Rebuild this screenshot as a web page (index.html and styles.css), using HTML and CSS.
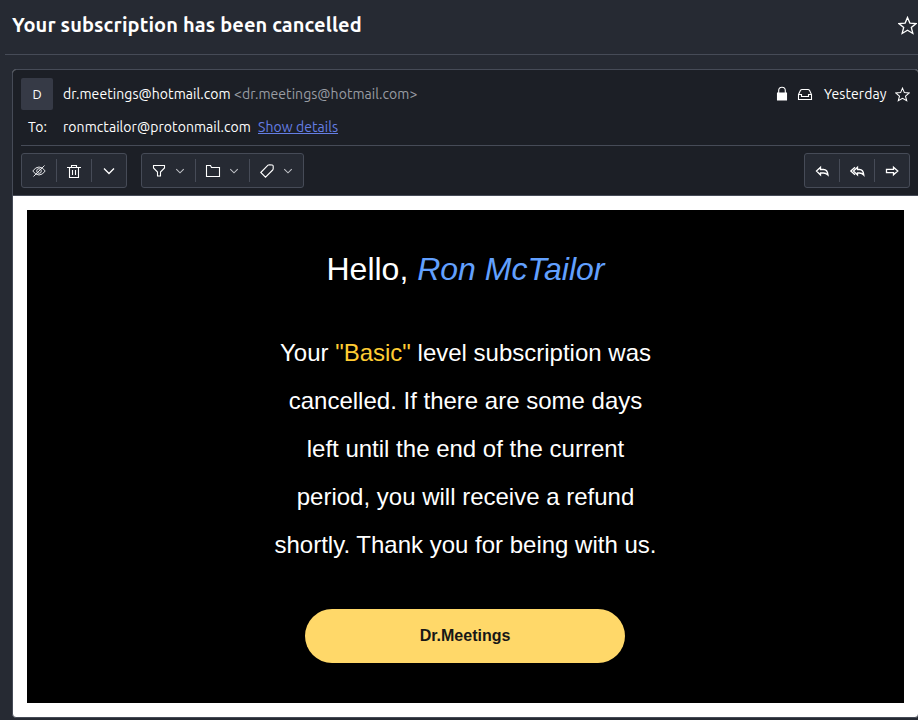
FILE: index.html
```html
<!DOCTYPE html>
<html lang="en">
<head>
<meta charset="utf-8">
<title>Your subscription has been cancelled</title>
<link rel="stylesheet" href="styles.css">
</head>
<body>
<svg class="defs" width="0" height="0">
  <symbol id="star" viewBox="0 0 16 16"><path d="M8 1.200l2 4.800 5.200.4-4 3.300 1.300 5L8 12l-4.500 2.700 1.300-5-4-3.300L6 6z"/></symbol>
  <symbol id="chev" viewBox="0 0 16 16"><path d="M3 5.500l5 5 5-5"/></symbol>
</svg>
<header class="title-bar">
  <h1 class="title">Your subscription has been cancelled</h1>
  <svg class="icon title-star" width="19" height="19"><use href="#star"/></svg>
</header>
<article class="card">
  <div class="message-head">
    <div class="row sender-row">
      <span class="avatar">D</span>
      <span class="sender">dr.meetings@hotmail.com</span>
      <span class="address">&lt;dr.meetings@hotmail.com&gt;</span>
      <div class="meta">
        <svg class="icon" width="14" height="16" viewBox="0 0 14 16"><path class="solid" d="M2.500 7h9v7h-9z"/><path d="M3.700 7V4.500a3.300 3.300 0 0 1 6.600 0V7"/></svg>
        <svg class="icon inbox" width="16" height="16" viewBox="0 0 16 16"><path d="M1.500 8.500L3.500 4.200Q4 3.500 5 3.500h6q1 0 1.500.7l2 4.300v5h-13zM1.500 8.500h3v2h7v-2h3"/></svg>
        <span class="date">Yesterday</span>
        <svg class="icon small-star" width="15" height="15"><use href="#star"/></svg>
      </div>
    </div>
    <div class="row to-row">
      <span class="to-label">To:</span>
      <span class="recipient">ronmctailor@protonmail.com</span>
      <a class="details" href="#">Show details</a>
    </div>
    <div class="toolbar">
      <div class="group">
        <button class="tool"><svg class="icon soft" width="16" height="16" viewBox="0 0 16 16"><path d="M1.800 8Q4.500 4 8 4t6.200 4Q11.500 12 8 12T1.800 8z"/><circle cx="8" cy="8" r="2.300"/><path d="M2.500 13.500l11-11"/></svg></button>
        <button class="tool"><svg class="icon" width="16" height="16" viewBox="0 0 16 16"><path d="M1 4.500h14M5.500 4V2.500h5V4M3.500 4.500v10h9v-10M6.500 7v5M9.500 7v5"/></svg></button>
        <button class="tool"><svg class="icon bold" width="16" height="16"><use href="#chev"/></svg></button>
      </div>
      <div class="group group-wide">
        <button class="tool"><svg class="icon" width="16" height="16" viewBox="0 0 16 16"><path d="M2.500 2.500h11V5L9.500 9v4h-3V9l-4-4z"/></svg><svg class="icon faint" width="12" height="12"><use href="#chev"/></svg></button>
        <button class="tool"><svg class="icon" width="16" height="16" viewBox="0 0 16 16"><path d="M1.500 13.500v-11h4l1 2h8v9z"/></svg><svg class="icon faint" width="12" height="12"><use href="#chev"/></svg></button>
        <button class="tool"><svg class="icon" width="16" height="16" viewBox="0 0 16 16"><path d="M1.800 9.500L9 2.200q.5-.5 1.500-.5l2.700.3q1 .2 1 1.200v2.600q0 .7-.5 1.200L6.500 14.200z"/></svg><svg class="icon faint" width="12" height="12"><use href="#chev"/></svg></button>
      </div>
      <div class="group group-end">
        <button class="tool"><svg class="icon bold" width="16" height="16" viewBox="0 0 16 16"><path d="M2.500 8l4-3.700V6.500h3q4 0 4.500 5.500Q12 10 9.500 10h-3v2z"/></svg></button>
        <button class="tool"><svg class="icon bold" width="16" height="16" viewBox="0 0 16 16"><path d="M4.500 8l4-3.700V6.500h2q3.800 0 4.300 5.500Q13 10 10.500 10h-2v2zM6 4.200L1.800 8 6 11.800"/></svg></button>
        <button class="tool"><svg class="icon bold" width="16" height="16" viewBox="0 0 16 16"><path d="M2.500 6.300h7V4.200L13.800 8l-4.300 3.800V9.700h-7z"/></svg></button>
      </div>
    </div>
  </div>
  <div class="message-body">
    <div class="mail">
      <p class="greeting">Hello, <em class="name">Ron McTailor</em></p>
      <p class="copy">Your <span class="level">"Basic"</span> level subscription was<br>cancelled. If there are some days<br>left until the end of the current<br>period, you will receive a refund<br>shortly. Thank you for being with us.</p>
      <a class="brand">Dr.Meetings</a>
    </div>
  </div>
</article>
</body>
</html>
```
FILE: styles.css
```css
* { box-sizing: border-box; }
body {
  margin: 0;
  height: 720px;
  overflow: hidden;
  background: #262a33;
  color: #fff;
  font: 14px/20px Ubuntu, "Noto Sans", sans-serif;
}
.defs { display: block; height: 0; }
.icon { flex: none; fill: none; stroke: #fff; stroke-width: 1.1; }
.icon .solid { fill: #fff; }
.soft { stroke: #e4e5e8; stroke-width: 1; }
.bold { stroke-width: 1.3; }
.faint { stroke: #c0c2c7; stroke-width: 1.4; }
.title-bar {
  display: flex;
  align-items: center;
  justify-content: space-between;
  height: 55px;
  margin-left: 5px;
  padding: 0 1px 5px 7px;
  border-bottom: 1px solid #464b57;
}
.title { margin: 0; font-size: 20px; font-weight: 700; white-space: nowrap; letter-spacing: .12px; }
.title-star { margin: 1px 0 0; }
.card {
  width: 907px;
  height: 649px;
  margin: 14px 0 0 12px;
  border: 1px solid #464b57;
  border-radius: 4px;
  overflow: hidden;
  background: #fff;
}
.message-head { height: 126px; padding: 8px 8px 0 8px; background: #1c1f26; border-bottom: 1px solid #464b57; }
.row { display: flex; align-items: center; white-space: nowrap; }
.sender-row { height: 32px; }
.avatar {
  width: 32px;
  height: 32px;
  margin-right: 10px;
  border-radius: 2px;
  background: #363a46;
  font-size: 13px;
  line-height: 32px;
  text-align: center;
}
.sender { width: 171px; letter-spacing: .06px; }
.address { color: #999ca3; letter-spacing: .05px; }
.meta { display: flex; align-items: center; margin-left: auto; }
.inbox { margin-left: 8px; }
.date { width: 63px; margin: 0 8px 0 11px; letter-spacing: .06px; }
.to-row { height: 35px; padding-bottom: 1px; }
.to-label { width: 35px; margin-left: 7px; letter-spacing: .06px; }
.recipient { width: 195px; letter-spacing: .06px; }
.details { color: #657ee4; text-decoration: underline; letter-spacing: .06px; }
.toolbar { display: flex; height: 50px; padding-top: 7px; border-top: 1px solid #464b57; }
.group { display: flex; height: 35px; background: #262a33; border: 1px solid #464b57; border-radius: 3px; }
.group-wide { margin-left: 14px; }
.group-end { margin-left: auto; }
.tool {
  position: relative;
  display: flex;
  align-items: center;
  justify-content: center;
  width: 35px;
  padding: 0;
  border: 0;
  background: none;
}
.tool:first-child { width: 34px; }
.tool + .tool::before { content: ""; position: absolute; left: 0; top: 5px; width: 1px; height: 23px; background: #464b57; }
.group-wide .tool { width: 54px; gap: 7px; }
.group-wide .tool:first-child { width: 53px; }
.message-body { padding: 14px; }
.mail {
  height: 493px;
  padding-top: 35px;
  background: #000;
  font-family: "Liberation Sans", Arial, sans-serif;
  text-align: center;
}
.greeting { margin: 0; font-size: 32px; line-height: 48px; }
.name { color: #62a0ff; }
.copy { margin: 36px 0 0; font-size: 24px; line-height: 48px; }
.level { color: #fc3; }
.brand {
  display: block;
  width: 320px;
  height: 54px;
  margin: 40px auto 0 278px;
  border-radius: 27px;
  background: #ffd869;
  color: #171717;
  font-size: 16px;
  font-weight: 700;
  line-height: 53px;
}
```
